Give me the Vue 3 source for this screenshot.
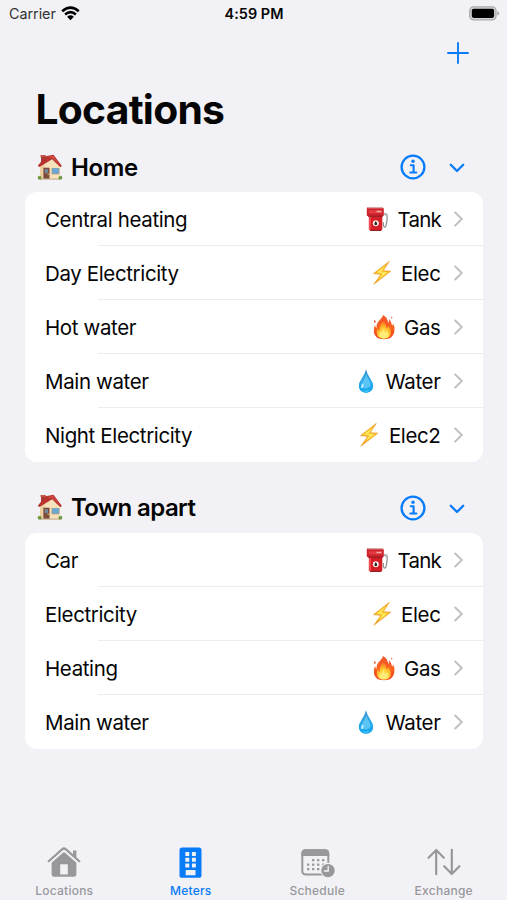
<script setup>
const sections = [
  {
    title: 'Home',
    meters: [
      { name: 'Central heating', kind: 'tank', unit: 'Tank' },
      { name: 'Day Electricity', kind: 'elec', unit: 'Elec' },
      { name: 'Hot water', kind: 'gas', unit: 'Gas' },
      { name: 'Main water', kind: 'water', unit: 'Water' },
      { name: 'Night Electricity', kind: 'elec', unit: 'Elec2' },
    ],
  },
  {
    title: 'Town apart',
    meters: [
      { name: 'Car', kind: 'tank', unit: 'Tank' },
      { name: 'Electricity', kind: 'elec', unit: 'Elec' },
      { name: 'Heating', kind: 'gas', unit: 'Gas' },
      { name: 'Main water', kind: 'water', unit: 'Water' },
    ],
  },
]
const tabs = ['Locations', 'Meters', 'Schedule', 'Exchange']
const dots = [[10, 0], [15, 0], [20, 0], [5, 4.5], [10, 4.5], [15, 4.5], [20, 4.5], [5, 9], [10, 9], [15, 9]]
</script>

<template>
  <div class="screen">
    <svg class="defs" width="0" height="0" aria-hidden="true">
      <defs>
        <linearGradient id="flame" x1="0" y1="0" x2="0" y2="1">
          <stop offset="0" stop-color="#f1532c" /><stop offset=".55" stop-color="#fb6420" /><stop offset="1" stop-color="#f5341f" />
        </linearGradient>
        <radialGradient id="core" cx=".5" cy=".75" r=".65">
          <stop offset="0" stop-color="#fff27a" /><stop offset=".6" stop-color="#ffc52e" /><stop offset="1" stop-color="#fd8a22" />
        </radialGradient>
        <linearGradient id="drop" x1="0" y1="0" x2="0" y2="1">
          <stop offset="0" stop-color="#3a94cf" /><stop offset=".5" stop-color="#2fabe9" /><stop offset="1" stop-color="#0fa3ee" />
        </linearGradient>
        <linearGradient id="bolt" x1="1" y1="0" x2="0" y2="1">
          <stop offset="0" stop-color="#f6a623" /><stop offset=".5" stop-color="#fdc92f" /><stop offset="1" stop-color="#f39a27" />
        </linearGradient>
      </defs>
    </svg>

    <header class="status">
      <div class="carrier">
        <span>Carrier</span>
        <svg width="19" height="15" viewBox="0 0 19 15">
          <path d="M1.2 5.2Q9.5 -1.8 17.8 5.2M4.1 8.4Q9.5 3.9 14.9 8.4" fill="none" stroke="#000" stroke-width="2.6" />
          <path d="M6.1 10.7Q9.5 7.9 12.9 10.7L9.5 14.2Z" />
        </svg>
      </div>
      <span class="time">4:59 PM</span>
      <svg class="battery" width="31" height="15" viewBox="0 0 31 15">
        <rect x=".8" y=".8" width="26.2" height="13" rx="3.8" fill="#d4d3d7" stroke="#aaa9ac" stroke-width="1.3" />
        <rect x="2.8" y="2.7" width="22.3" height="9.2" rx="1.8" />
        <path d="M28.3 5v4.8q2-.9 2-2.4T28.3 5Z" fill="#aaa9ac" />
      </svg>
    </header>

    <div class="toolbar">
      <svg width="22" height="22" viewBox="0 0 22 22" fill="none" stroke="#087bf8" stroke-width="1.9" stroke-linecap="round">
        <path d="M11 1v20M1 11h20" />
      </svg>
    </div>
    <h1>Locations</h1>

    <main>
      <section v-for="section in sections" :key="section.title">
        <div class="section-head">
          <svg class="house" width="26" height="27" viewBox="0 0 26 27">
            <path d="M3.1 12.2 12.8 3l9.8 9v13H3.1Z" fill="#f3dfb8" />
            <path d="M3.1 12.2 7.6 7v18H3.1Z" fill="#ecd0a2" />
            <path d="M4 1.7h4.2v5L4 10Z" fill="#a33b35" />
            <path d="M3.5 1h5.2v2H3.5Z" fill="#c5544a" />
            <path d="M8.5 2.2 16.5.7l8.4 11.2-1.6 1.4-8.2-8L2.4 13.1.8 11.7Z" fill="#b8322e" />
            <path d="m9.3 3 6.8-1.2 7 9.2-7.5-6.8Z" fill="#cf4a42" />
            <path d="M15.1 6 22.6 13v12H8V12.3Z" fill="#f5e2ba" />
            <path d="M6.4 13.7h6.1V25H6.4Z" fill="#7d4b3c" />
            <path d="M7.8 15.2h3.2v4H7.8Z" fill="#71889a" />
            <circle cx="11.2" cy="20.3" r=".7" fill="#f0ce67" />
            <path d="M14.5 14h8v6.3h-8Z" fill="#b99a78" />
            <path d="M15.2 14.3h6.6v5.3h-6.6Z" fill="#67a8d6" />
            <path d="M2.6 24.5h21v1.2h-21Z" fill="#c9b090" />
            <circle cx="2.6" cy="23.7" r="1.9" fill="#69933e" />
            <circle cx="23.4" cy="23.7" r="1.9" fill="#69933e" />
            <path d="M1.4 23h1.8M22.4 23h1.8" stroke="#91b65a" />
          </svg>
          <h2 :class="{ long: section.title.length > 5 }">{{ section.title }}</h2>
          <svg class="info" width="26" height="26" viewBox="0 0 26 26" fill="none" stroke="#087bf8">
            <circle cx="13" cy="13" r="11.4" stroke-width="2.3" />
            <path d="M10.8 11.2h2.8v7.2M10.3 18.5h6" stroke-width="2.1" stroke-linecap="round" stroke-linejoin="round" />
            <circle cx="13" cy="7.3" r="1.7" fill="#087bf8" stroke="none" />
          </svg>
          <svg class="collapse" width="16" height="10" viewBox="0 0 16 10" fill="none" stroke="#087bf8" stroke-width="2.3" stroke-linecap="round" stroke-linejoin="round">
            <path d="m1.8 1.8 6.2 6.2 6.2-6.2" />
          </svg>
        </div>

        <div class="card">
          <div v-for="meter in section.meters" :key="meter.name" class="row">
            <span class="name">{{ meter.name }}</span>
            <svg v-if="meter.kind === 'tank'" class="emoji" width="26" height="26" viewBox="0 0 26 26">
              <path d="M18.7 7.3 21.4 9.4q1.3 1.2.7 4.3l-.9 5.5q-.6 2.4-2 1.7-1-.5-.8-4.8" fill="none" stroke="#929292" stroke-width="1.3" />
              <path d="M19.3 7.2h2.8l1.2 2.8-1.6.7Z" fill="#b8b8b8" />
              <path d="M1.8 2.1 3.2 1h13.6l2 1.4v7.1l-1.5 1.2H3.5L1.8 9.5Z" fill="#ce232b" />
              <path d="M3.9 10.4h13.4v13.1l-1.8 1.2H5.2l-1.3-1.2Z" fill="#d51d26" />
              <path d="M3.9 10.4h2v13.7h-1l-1-.7Z" fill="#f34c4e" />
              <path d="M3.5 1.2h13.7l1 1H2.5Z" fill="#ded2cb" />
              <path d="M3.7 4.2h13.4v3H3.7Z" fill="#e23c42" />
              <path d="M11.5 4.8h5v1.5h-5Z" fill="#efb0a8" />
              <path d="M3.4 10.2h14.2" stroke="#87151e" />
              <circle cx="10.8" cy="17.3" r="3" fill="#f8eee6" />
              <path d="M10.8 15q2.9 4 0 4.2-2.9-.2 0-4.2Z" fill="#302625" />
              <path d="M5.1 24.4h11.2" stroke="#8b171f" />
            </svg>
            <svg v-else-if="meter.kind === 'elec'" class="emoji" width="26" height="26" viewBox="0 0 26 26">
              <path d="M20.2 1.5 4.6 13.6l7.3.7-7 9.9 16.8-13-7.6-.4Z" fill="url(#bolt)" stroke="#eda127" stroke-width=".8" stroke-linejoin="round" />
              <path d="m16.8 5.4-9 7.2 6 .6-4.3 6.1 8.9-7.1-6.3-.3Z" fill="#ffe95c" />
            </svg>
            <svg v-else-if="meter.kind === 'gas'" class="emoji" width="26" height="26" viewBox="0 0 26 26">
              <path d="M11.9 1q5 2.6 5.2 8.1Q18.7 7.2 18 5q3 3.5 3.1 6.5 1.2-.8 1.2-2.3 2 4.6.9 9-1.6 7-10.3 7.1-8.7 0-10-6.7-.9-4.5 1.2-7.6.2 2.3 1.5 3-.5-5 3.2-8Q12 3.3 11.9 1Z" fill="url(#flame)" />
              <path d="M3.4 8.9q-1.3-1.7.5-3.2.2 1.5 1 2.1-.3 1-1.5 1.1M20.5 4.5q-.7-.9-.2-2 1 .7 1.2 1.5Z" fill="#ee542c" />
              <path d="M12.1 7.8q3.4 2.4 3.3 6.4 1.7-.6 2-2.5 2.2 3 2.5 6.3.4 6.7-7 6.8-7.1.1-7.3-6.2-.2-2.4 1.4-4.3.1 2.3 1.5 2.6-.2-5.9 3.6-9.1Z" fill="url(#core)" />
              <path d="M12.7 14.4q-.8 3.6 1.7 4.4 1.4-.1 1.7-1.7 3.7 6.7-3.3 7.3-6.8-.6-3.2-7 .2 2 1.3 2.1-.2-3.3 1.8-5.1Z" fill="#ffed77" />
            </svg>
            <svg v-else class="emoji" width="26" height="26" viewBox="0 0 26 26">
              <path d="M13 1.2q-1 4.6-4.9 10.2-4.2 6.3-.9 10.8 2.3 2.7 5.8 2.7t5.8-2.7q3.3-4.5-.9-10.8Q14 5.8 13 1.2Z" fill="url(#drop)" />
              <path d="M13.2 6q-.5 3.1-2.7 6.4-3.2 4.7-.9 7 3.2 2 6.4.2 2.9-2.2 0-7.2Q13.9 9 13.2 6Z" fill="#83dcff" opacity=".55" />
              <ellipse cx="9.3" cy="18" rx="1.1" ry="2.3" transform="rotate(14 9.3 18)" fill="#d8f6ff" opacity=".85" />
              <path d="M9 21.5q4 2.7 8-.1-3.6 4.8-8 .1Z" fill="#5ddafe" />
            </svg>
            <span class="unit" :class="meter.kind">{{ meter.unit }}</span>
            <svg class="chevron" width="10" height="16" viewBox="0 0 10 16" fill="none" stroke="#c2c2c5" stroke-width="2.1" stroke-linecap="round" stroke-linejoin="round">
              <path d="m1.2 1.6 6.6 6.4-6.6 6.4" />
            </svg>
          </div>
        </div>
      </section>
    </main>

    <nav>
      <div v-for="tab in tabs" :key="tab" class="tab" :class="{ active: tab === 'Meters' }">
        <svg v-if="tab === 'Locations'" width="36" height="32" viewBox="0 0 36 32">
          <path d="M2.7 15.2 16.3 3.2q1.7-1.4 3.4 0l13.6 12" fill="none" stroke="currentColor" stroke-width="2.2" stroke-linecap="round" />
          <path d="M27 4.6h3.4v7.8L27 9.4Z" fill="currentColor" />
          <path fill-rule="evenodd" d="M16.9 6.8q1.1-.9 2.2 0L30.4 16.8V28q0 2.7-2.6 2.7H8.2q-2.6 0-2.6-2.7V16.8ZM14.2 18.2v10.2h7.6V18.2Z" fill="currentColor" />
        </svg>
        <svg v-else-if="tab === 'Meters'" width="36" height="32" viewBox="0 0 36 32">
          <rect x="6.5" y="1.5" width="22" height="30.3" rx="2.6" fill="currentColor" />
          <g fill="#f2f1f6">
            <rect v-for="n in 6" :key="n" :x="n % 2 ? 12.3 : 18.9" :y="5.9 + Math.floor((n - 1) / 2) * 5.8" width="4" height="4" rx=".4" />
            <rect x="12.7" y="24" width="9.8" height="5.2" rx=".5" />
          </g>
        </svg>
        <svg v-else-if="tab === 'Schedule'" width="36" height="32" viewBox="0 0 36 32">
          <rect x="3.3" y="4.3" width="26" height="24.3" rx="3.4" fill="none" stroke="currentColor" stroke-width="2" />
          <path d="M2.4 10.1V7.2q0-4 4-4h19.8q4 0 4 4v2.9Z" fill="currentColor" />
          <g fill="currentColor">
            <rect v-for="(dot, i) in dots" :key="i" :x="dot[0] + 3" :y="dot[1] + 13" width="2.4" height="2.3" rx=".5" />
          </g>
          <circle cx="29" cy="24.6" r="7.8" fill="#f2f1f6" />
          <circle cx="29" cy="24.6" r="6.7" fill="currentColor" />
          <path d="M29.2 20.4v4.6h-3.8" fill="none" stroke="#f2f1f6" stroke-width="1.4" stroke-linecap="round" />
        </svg>
        <svg v-else width="36" height="32" viewBox="0 0 36 32" fill="none" stroke="currentColor" stroke-width="2.2" stroke-linecap="round" stroke-linejoin="round">
          <path d="M10.2 28.2V4M2.6 11.8 10.2 3.9l7.6 7.9M25.8 3.8V28M18.2 20.2l7.6 7.9 7.6-7.9" />
        </svg>
        <span>{{ tab }}</span>
      </div>
    </nav>
  </div>
</template>

<style>
body { background: #f2f1f6; }
</style>

<style scoped>
.screen { width: 507px; height: 900px; overflow: hidden; display: flex; flex-direction: column; background: #f2f1f6; color: #050506; font-family: Inter, "Liberation Sans", sans-serif; }
.defs { position: absolute; }
svg { flex: none; display: block; }
.status { height: 27px; display: grid; grid-template-columns: 1fr auto 1fr; align-items: center; padding: 0 7px 0 9px; box-sizing: border-box; font-size: 14.4px; }
.carrier { display: flex; gap: 5.5px; align-items: center; letter-spacing: -.05px; color: #333; }
.carrier svg { margin-top: -1px; }
.time { font-weight: 600; letter-spacing: .05px; margin-right: 1px; }
.battery { justify-self: end; margin-top: -1px; }
.toolbar { height: 51px; display: flex; justify-content: flex-end; align-items: center; padding-right: 38px; }
h1 { margin: 0; height: 64px; padding-left: 35.5px; font-size: 40.8px; line-height: 62px; font-weight: 700; letter-spacing: -.75px; }
main { flex: 1; }
section { margin-bottom: 20.5px; }
.section-head { height: 50px; display: flex; align-items: center; padding: 0 42px 0 37px; }
h2 { margin: 0 auto 0 8px; font-size: 24px; font-weight: 600; letter-spacing: -.35px; }
h2.long { letter-spacing: -.6px; }
.info { margin-right: .5px; }
.collapse { margin: 2px 0 0 22.5px; }
.card { margin: 0 24.5px 0 25px; border-radius: 12px; background: #fff; overflow: hidden; }
.row { height: 54.1px; display: flex; align-items: center; padding: 0 19px 0 20px; font-size: 20.5px; letter-spacing: -.37px; background: linear-gradient(#ececef, #ececef) 73px 100% / 100% 1.4px no-repeat; }
.row:last-child { background: none; }
.name { margin-right: auto; }
.unit { margin: 0 13px 0 6.5px; }
.unit.tank { letter-spacing: -.8px; margin-right: 12.6px; }
nav { height: 60px; display: grid; grid-template-columns: repeat(4, 126.5px); padding-left: 1px; }
.tab { display: flex; flex-direction: column; align-items: center; padding-top: 6px; color: #98989c; font-size: 12px; line-height: 16px; font-weight: 500; letter-spacing: .25px; gap: 5px; }
.active { color: #087bf8; }
</style>
